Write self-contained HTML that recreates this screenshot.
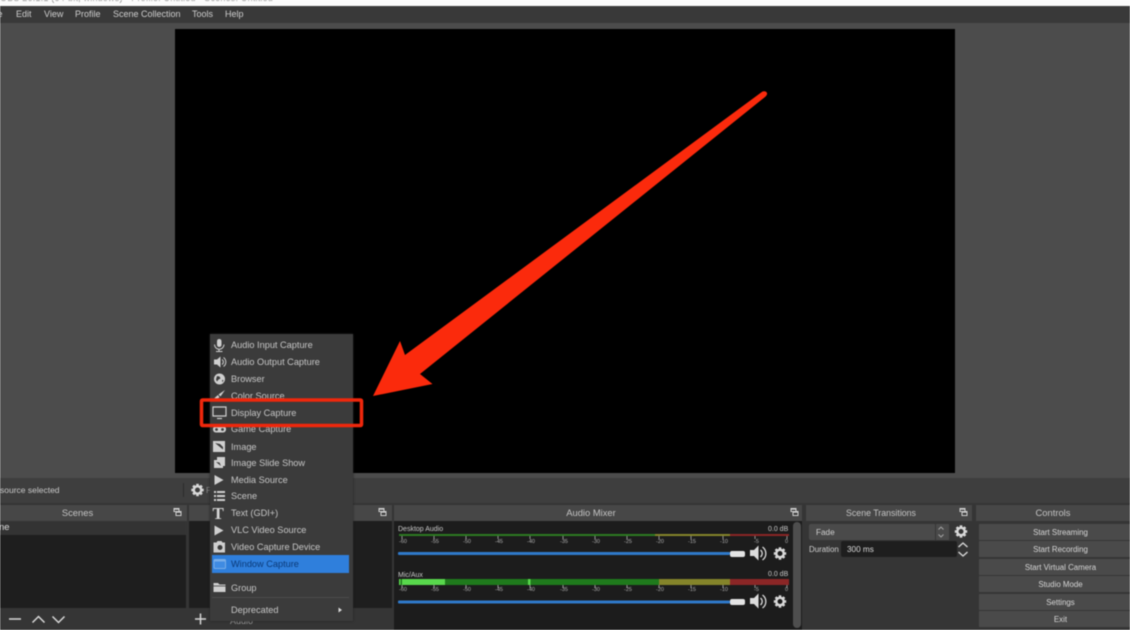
<!DOCTYPE html>
<html><head><meta charset="utf-8"><style>
html,body{margin:0;padding:0}
#r{position:relative;width:1130px;height:630px;overflow:hidden;background:#3a3a3a;font-family:"Liberation Sans",sans-serif;color:#d2d2d2;font-size:9px;filter:blur(.5px)}
.a{position:absolute}
.t{position:absolute;white-space:nowrap;line-height:12px}
.menu{font-size:9px;color:#cfcfcf;top:8px}
.hd{position:absolute;top:505px;height:16px;background:#474747;text-align:center;font-size:9.4px;line-height:16px;color:#c4c4c4}
.btn{position:absolute;left:979px;width:163px;height:16px;background:#4a4a4a;text-align:center;font-size:7.9px;line-height:17px;color:#d6d6d6}
.mi{position:absolute;left:231px;font-size:9.2px;line-height:12px;color:#c6c6c6;white-space:nowrap}
.sc{position:absolute;left:399px;font-size:5.5px;line-height:8px;color:#aaa;white-space:nowrap}
.sc span{position:absolute}
</style></head><body><div id="r">
<div class="a" style="left:0;top:0;width:1130px;height:6px;background:#fbfbfb"></div>
<div class="t" style="left:0;top:-8px;font-size:9px;color:#888;letter-spacing:.2px">OBS 26.1.1 (64-bit, windows) - Profile: Untitled - Scenes: Untitled</div>
<div class="a" style="left:0;top:6px;width:1130px;height:17px;background:#393939"></div>
<div class="a" style="left:0;top:23px;width:1130px;height:455px;background:#4c4c4c"></div>
<div class="t menu" style="left:-12px">File</div><div class="t menu" style="left:16px">Edit</div><div class="t menu" style="left:44px">View</div><div class="t menu" style="left:75px">Profile</div><div class="t menu" style="left:113px">Scene Collection</div><div class="t menu" style="left:192px">Tools</div><div class="t menu" style="left:225px">Help</div>
<div class="a" style="left:175px;top:29px;width:780px;height:444px;background:#000"></div>

<div class="a" style="left:0;top:478px;width:1130px;height:25px;background:#3e3e3e"></div>
<div class="t" style="left:0;top:484px;font-size:8.5px;color:#c8c8c8">source selected</div>
<div class="t" style="left:206px;top:484px;font-size:8.5px;color:#888">P</div>
<div class="a" style="left:183px;top:483px;width:1px;height:14px;background:#2c2c2c"></div>
<div class="a" style="left:0;top:503px;width:1130px;height:127px;background:#353535"></div>

<div class="hd" style="left:0;width:187px"><span style="position:relative;left:-16px">Scenes</span></div>
<div class="hd" style="left:189px;width:203px"></div>
<div class="hd" style="left:394px;width:408px"><span style="position:relative;left:-7px">Audio Mixer</span></div>
<div class="hd" style="left:806px;width:166px;font-size:8.8px;line-height:17px"><span style="position:relative;left:-8px">Scene Transitions</span></div>
<div class="hd" style="left:976px;width:154px">Controls</div>

<div class="a" style="left:0;top:521px;width:186px;height:14px;background:#333"></div>
<div class="t" style="left:-1px;top:522px;font-size:9.5px;color:#ddd">ne</div>
<div class="a" style="left:0;top:535px;width:186px;height:73px;background:#1e1e1e"></div>
<div class="a" style="left:189px;top:521px;width:203px;height:87px;background:#1e1e1e"></div>
<div class="a" style="left:394px;top:521px;width:408px;height:109px;background:#1c1c1c"></div>
<div class="a" style="left:793px;top:522px;width:8px;height:106px;background:#4e4e4e;border-radius:4px"></div>

<svg class="a" style="left:0;top:0" width="1130" height="630" viewBox="0 0 1130 630">
<defs>
<g id="gear"><circle r="3.7" fill="none" stroke="#d8d8d8" stroke-width="2.4"/><g fill="#d8d8d8"><rect x="-1.3" y="-6.2" width="2.6" height="2.6"/><rect x="-1.3" y="-6.2" width="2.6" height="2.6" transform="rotate(45)"/><rect x="-1.3" y="-6.2" width="2.6" height="2.6" transform="rotate(90)"/><rect x="-1.3" y="-6.2" width="2.6" height="2.6" transform="rotate(135)"/><rect x="-1.3" y="-6.2" width="2.6" height="2.6" transform="rotate(180)"/><rect x="-1.3" y="-6.2" width="2.6" height="2.6" transform="rotate(225)"/><rect x="-1.3" y="-6.2" width="2.6" height="2.6" transform="rotate(270)"/><rect x="-1.3" y="-6.2" width="2.6" height="2.6" transform="rotate(315)"/></g></g>
<g id="spk"><path d="M-8-3h4l4.500-4.500v15l-4.500-4.500h-4z" fill="#dcdcdc"/><path d="M2.500-3a4.500 4.500 0 0 1 0 7M4.500-6a8 8 0 0 1 0 13" fill="none" stroke="#dcdcdc" stroke-width="1.300"/></g>
<g id="pop"><path d="M-3-4h5v3h-5zM-1-1h5v4h-5z" fill="#3c3c3c" stroke="#cfcfcf" stroke-width="1"/><path d="M-3-4h5v1.200h-5zM-1-1h5v1.200h-5z" fill="#cfcfcf"/></g>
</defs>
<use href="#pop" x="177" y="512.500"/><use href="#pop" x="382" y="512.500"/><use href="#pop" x="794" y="512.500"/><use href="#pop" x="963" y="512.500"/>
<use href="#gear" x="197.500" y="490"/>

<g fill="none" stroke="#d8d8d8" stroke-width="1.500">
<path d="M9 619h12M32.500 622.500l6-6 6 6M52.500 616.500l6 6 6-6M-3 619h3"/>
<path d="M195 619h11M200.500 613.500v11"/>
</g>

<rect x="399" y="534" width="256" height="2" fill="#2c7a22"/><rect x="655" y="534" width="75" height="2" fill="#85852a"/><rect x="730" y="534" width="59" height="2" fill="#8a2525"/>
<g stroke="#b0b0b0" stroke-width=".8"><path d="M402 536v3M434 536v3M466 536v3M498 536v3M530 536v3M563 536v3M595 536v3M627 536v3M659 536v3M691 536v3M723 536v3M755 536v3M787 536v3"/></g>
<rect x="399" y="579" width="256" height="6" fill="#1f7a1c"/><rect x="659" y="579" width="71" height="6" fill="#84842a"/><rect x="730" y="579" width="59" height="6" fill="#8b2626"/>
<rect x="655" y="579" width="4" height="6" fill="#1f7a1c"/>
<rect x="402" y="579" width="43" height="6" fill="#58d84c"/><rect x="399" y="579" width="1.500" height="6" fill="#58d84c"/><rect x="528" y="579" width="2.500" height="6" fill="#58d84c"/>
<g stroke="#b0b0b0" stroke-width=".8"><path d="M402 585v3M434 585v3M466 585v3M498 585v3M530 585v3M563 585v3M595 585v3M627 585v3M659 585v3M691 585v3M723 585v3M755 585v3M787 585v3"/></g>
<rect x="398" y="552" width="332" height="3" rx="1" fill="#2f79c9"/><rect x="398" y="600.500" width="332" height="3" rx="1" fill="#2f79c9"/>
<rect x="730" y="551" width="15" height="6" rx="2" fill="#e4e4e4"/><rect x="730" y="599" width="15" height="6" rx="2" fill="#e4e4e4"/>
<use href="#spk" x="758" y="553"/><use href="#spk" x="758" y="601"/>
<use href="#gear" x="780" y="553.500"/><use href="#gear" x="780" y="601.500"/>
<use href="#gear" x="961" y="531.500"/>

<path d="M373 396L400 341L405 355L762.500 91.500Q766 90.500 767 93Q767.500 95 765 97L420 374L432.500 384Z" fill="#fb2a0c"/>
</svg>

<div class="t" style="left:398px;top:524px;font-size:7px;color:#c8c8c8">Desktop Audio</div>
<div class="t" style="left:768px;top:524px;font-size:7px;color:#c8c8c8">0.0 dB</div>
<div class="t" style="left:398px;top:570px;font-size:7px;color:#c8c8c8">Mic/Aux</div>
<div class="t" style="left:768px;top:569px;font-size:7px;color:#c8c8c8">0.0 dB</div>
<div class="sc" style="top:538px"><span style="left:0">-60</span><span style="left:32px">-55</span><span style="left:64px">-50</span><span style="left:96px">-45</span><span style="left:128px">-40</span><span style="left:161px">-35</span><span style="left:193px">-30</span><span style="left:225px">-25</span><span style="left:257px">-20</span><span style="left:289px">-15</span><span style="left:321px">-10</span><span style="left:355px">-5</span><span style="left:386px">0</span></div>
<div class="sc" style="top:586px"><span style="left:0">-60</span><span style="left:32px">-55</span><span style="left:64px">-50</span><span style="left:96px">-45</span><span style="left:128px">-40</span><span style="left:161px">-35</span><span style="left:193px">-30</span><span style="left:225px">-25</span><span style="left:257px">-20</span><span style="left:289px">-15</span><span style="left:321px">-10</span><span style="left:355px">-5</span><span style="left:386px">0</span></div>

<div class="a" style="left:809px;top:524px;width:126px;height:16px;background:#4a4a4a;border-radius:2px 0 0 2px"></div>
<div class="a" style="left:936px;top:524px;width:13px;height:16px;background:#4a4a4a"></div>
<div class="t" style="left:816px;top:527px;font-size:8.2px;color:#d0d0d0">Fade</div>
<svg class="a" style="left:935px;top:524px" width="13" height="16" viewBox="0 0 13 16"><path d="M3.500 5.500l2.500-2.500 2.500 2.500M3.500 10.500l2.500 2.500 2.500-2.500" fill="none" stroke="#a8a8a8" stroke-width=".9"/></svg>
<div class="t" style="left:809px;top:544px;font-size:7.9px;color:#d0d0d0">Duration</div>
<div class="a" style="left:841px;top:541px;width:116px;height:16px;background:#1e1e1e;border-radius:2px"></div>
<div class="t" style="left:847px;top:544px;font-size:8.2px;color:#d8d8d8">300 ms</div>
<svg class="a" style="left:956px;top:541px" width="14" height="17" viewBox="0 0 14 17"><path d="M2.500 6l4.500-4 4.500 4M2.500 11l4.500 4 4.500-4" fill="none" stroke="#d8d8d8" stroke-width="1.400"/></svg>

<div class="btn" style="top:524px">Start Streaming</div>
<div class="btn" style="top:541px">Start Recording</div>
<div class="btn" style="top:559px">Start Virtual Camera</div>
<div class="btn" style="top:576px">Studio Mode</div>
<div class="btn" style="top:594px">Settings</div>
<div class="btn" style="top:611px">Exit</div>

<div class="t" style="left:230px;top:615px;font-size:9px;color:#999">Audio</div>
<div class="a" style="left:210px;top:334px;width:143px;height:287px;background:#3b3b3b;box-shadow:0 0 2px #222"></div>
<div class="a" style="left:212px;top:555px;width:137px;height:18px;background:#2f7fdc"></div>
<div class="a" style="left:212px;top:597px;width:137px;height:1px;background:#4d4d4d"></div>
<div class="mi" style="top:339px">Audio Input Capture</div>
<div class="mi" style="top:356px">Audio Output Capture</div>
<div class="mi" style="top:373px">Browser</div>
<div class="mi" style="top:390px">Color Source</div>
<div class="mi" style="top:407px">Display Capture</div>
<div class="mi" style="top:423px">Game Capture</div>
<div class="mi" style="top:441px">Image</div>
<div class="mi" style="top:457px">Image Slide Show</div>
<div class="mi" style="top:474px">Media Source</div>
<div class="mi" style="top:490px">Scene</div>
<div class="mi" style="top:507px">Text (GDI+)</div>
<div class="mi" style="top:524px">VLC Video Source</div>
<div class="mi" style="top:541px">Video Capture Device</div>
<div class="mi" style="top:558px;color:#0b3a78">Window Capture</div>
<div class="mi" style="top:582px">Group</div>
<div class="mi" style="top:604px">Deprecated</div>

<svg class="a" style="left:0;top:0" width="1130" height="630" viewBox="0 0 1130 630">
<g fill="#cfcfcf" stroke="none">
<rect x="217" y="339" width="4.500" height="8" rx="2.200"/><path d="M214.500 344.500a4.700 4.700 0 0 0 9.500 0" fill="none" stroke="#cfcfcf"/><path d="M219 349v2.500M216 351.500h6.500" stroke="#cfcfcf"/>
<path d="M214 359.500h3l3.500-3v11l-3.500-3h-3z"/><path d="M222 359.500a3 3 0 0 1 0 5M223.500 357.500a5.500 5.500 0 0 1 0 9" fill="none" stroke="#cfcfcf"/>
<circle cx="219.500" cy="379" r="5.500"/><path d="M217 376l2.500.5 1 2-2 1-1.500 2-1-2zM222 380l1.500 0-1 2.500z" fill="#3b3b3b"/>
<path d="M225 390l-6.500 4.500 2 2zM218 395l-3.500 3 1 1.500 4-2z"/>
<path d="M213 407h13v9h-13z" fill="none" stroke="#cfcfcf" stroke-width="1.200"/><path d="M217 418.500h5" stroke="#cfcfcf" stroke-width="1.200"/>
<rect x="213" y="426" width="13" height="6.500" rx="3"/><circle cx="216.500" cy="429.500" r="1.400" fill="#3b3b3b"/><circle cx="222.500" cy="429.500" r="1.400" fill="#3b3b3b"/>
<rect x="213" y="441" width="12" height="11"/><path d="M215 443l8 6.500v-2.500l-3-3z" fill="#3b3b3b"/>
<path d="M217 457h8v9h-2v2h-9v-8h3z"/><path d="M216 462l5 4-1.500-3.500z" fill="#3b3b3b"/>
<path d="M214.500 475l9 5-9 5z"/>
<path d="M214 491h2v2h-2zM217 491h8v2h-8zM214 495h2v2h-2zM217 495h8v2h-8zM214 499h2v2h-2zM217 499h8v2h-8z"/>
<text x="212.500" y="519" font-family="Liberation Serif,serif" font-size="17" font-weight="bold" fill="#d6d6d6">T</text>
<path d="M214.500 525.500l9 5-9 5z"/>
<path d="M213.500 542.500h3l1-1.500h4l1 1.500h2.500v10h-11.500z"/><circle cx="220" cy="547.500" r="2.500" fill="#3b3b3b"/>
<rect x="214" y="559.500" width="11.500" height="9" rx="1" fill="#3f8be2" stroke="#79aee8"/><rect x="214" y="559.500" width="11.500" height="2" fill="#79aee8"/>
<path d="M213.500 583h4.500l1.500 1.500h6v7.500h-12z" fill="#cfcfcf"/><path d="M213.500 586h12" stroke="#3b3b3b" stroke-width=".8"/>
<path d="M338.500 607.500l3.500 2.500-3.500 2.500z" fill="#d8d8d8"/>
</g>
<rect x="201.500" y="400" width="160" height="25.500" fill="none" stroke="#ef270c" stroke-width="3.500" rx="1"/>
</svg>
</div></body></html>
